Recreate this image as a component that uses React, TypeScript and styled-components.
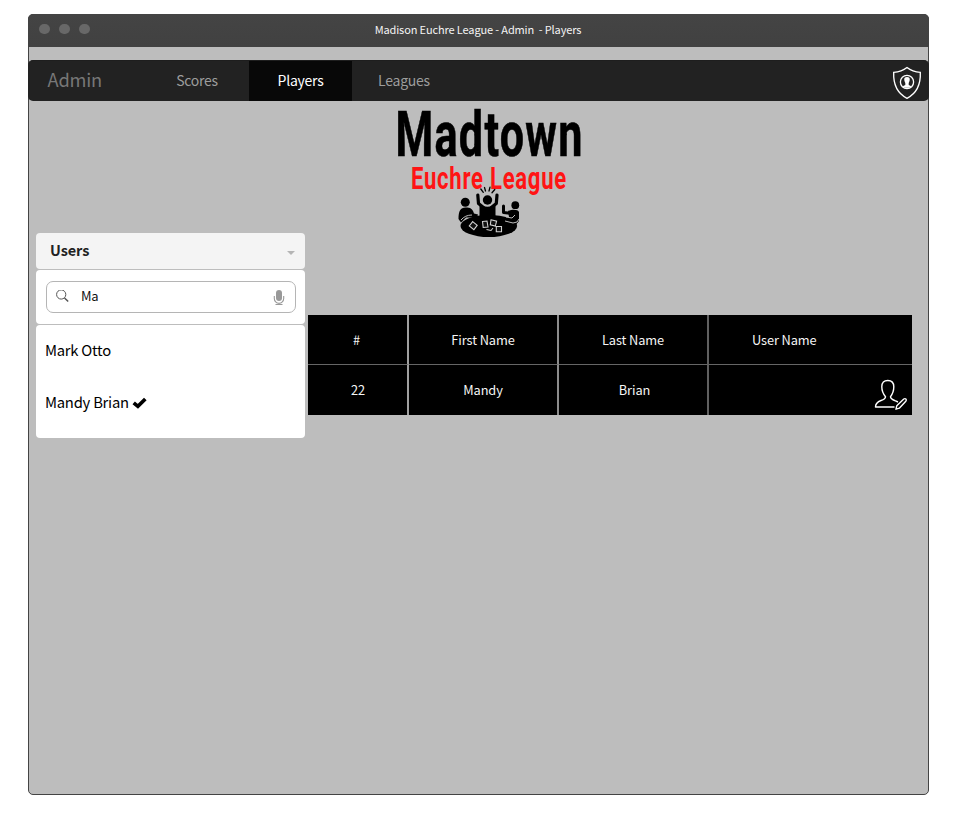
import React from 'react';
import styled, { createGlobalStyle } from 'styled-components';

const Global = createGlobalStyle`
  * { box-sizing: border-box; }
  body { margin: 0; background: #fff; font-family: "Noto Sans CJK SC", "Noto Sans", sans-serif; }
`;

const Desktop = styled.div`
  padding: 14px 26px 20px 28px;
  height: 815px;
`;
const Window = styled.div`
  width: 901px;
  height: 781px;
  background: #bdbdbd;
  border: 1px solid #444;
  border-radius: 5px;
`;
const TitleBar = styled.header`
  display: grid;
  grid-template-columns: 100px 1fr 100px;
  align-items: center;
  height: 33px;
  margin: -1px -1px 0;
  background: linear-gradient(#444, #414141);
  border-radius: 5px 5px 0 0;
`;
const Dots = styled.div`
  display: flex;
  gap: 9.5px;
  padding: 0 0 3px 11px;
`;
const Dot = styled.span`
  width: 10.5px;
  height: 10.5px;
  border-radius: 50%;
  background: #686868;
`;
const Title = styled.h1`
  margin: 0;
  text-align: center;
  color: #f4f4f4;
  font-size: 11px;
  font-weight: 400;
  letter-spacing: -0.13px;
  line-height: 16px;
  padding: 0 1px 3px 0;
  white-space: pre;
`;
const NavBar = styled.nav`
  display: flex;
  height: 41px;
  margin: 13px -1px 0;
  border-radius: 5px;
  background: #222;
  border-top: 1px solid #1e1e1e;
`;
const Brand = styled.div`
  width: 117px;
  padding-left: 19.5px;
  color: #777;
  font-size: 18.3px;
  letter-spacing: -0.2px;
  line-height: 37px;
`;
const Tab = styled.a<{ $active?: boolean; $width: number }>`
  width: ${p => p.$width}px;
  text-align: center;
  font-size: 14px;
  letter-spacing: -0.25px;
  line-height: 39px;
  color: ${p => (p.$active ? '#fff' : '#9d9d9d')};
  background: ${p => (p.$active ? '#080808' : 'transparent')};
`;
const ShieldButton = styled.div`
  margin: 5px 7px 0 auto;
  height: 34px;
  svg { display: block; }
`;
const LogoArea = styled.div`
  height: 132px;
  padding-left: 361px;
  svg { display: block; overflow: visible; }
`;
const Content = styled.main`
  display: flex;
  gap: 3px;
  padding-left: 7px;
`;
const Sidebar = styled.aside`
  display: flex;
  flex-direction: column;
  gap: 1px;
  width: 269px;
`;
const Panel = styled.section<{ $height: number; $tint?: boolean }>`
  height: ${p => p.$height}px;
  background: ${p => (p.$tint ? '#f4f4f4' : '#fff')};
  border-radius: 4px;
`;
const PanelHead = styled.div`
  display: flex;
  justify-content: space-between;
  padding: 0 10px 0 14px;
  font-size: 14.5px;
  font-weight: 700;
  letter-spacing: -0.1px;
  line-height: 34px;
  color: #222;
`;
const Caret = styled.span`
  margin-top: 18px;
  width: 0;
  height: 0;
  border: 4.5px solid transparent;
  border-top-color: #b5b5b5;
  border-bottom: 0;
`;
const SearchBox = styled.div`
  display: flex;
  align-items: center;
  height: 32px;
  margin: 0 9px 0 10px;
  padding: 0 10px 0 9px;
  border: 1px solid #b5b5b5;
  border-radius: 7px;
  font-size: 13px;
  letter-spacing: -0.2px;
  line-height: 28px;
  color: #111;
`;
const SearchPad = styled.div`
  padding-top: 11px;
`;
const Query = styled.span`
  flex: 1;
  padding: 0 0 3px 11px;
`;
const UserRow = styled.div`
  display: flex;
  align-items: center;
  gap: 4px;
  height: 52px;
  padding: 0 0 3px 9px;
  font-size: 14.8px;
  letter-spacing: -0.24px;
  color: #000;
  svg { margin: 3px 0 0 -1px; }
`;
const Table = styled.div`
  display: grid;
  grid-template-columns: 101px 150px 150px 203px;
  grid-template-rows: 50px 50px;
  width: 604px;
  margin-top: 82px;
  height: 100px;
`;
const Cell = styled.div<{ $line?: string; $head?: boolean; $shift?: number }>`
  display: flex;
  align-items: center;
  justify-content: center;
  background: #000;
  color: #f5f5f5;
  font-size: 12.8px;
  letter-spacing: -0.1px;
  padding-left: ${p => p.$shift || 0}px;
  padding-bottom: ${p => (p.$head ? 0 : 2)}px;
  border-right: ${p => (p.$line ? `2px solid ${p.$line}` : '0')};
  border-bottom: ${p => (p.$head ? '1px solid #666' : '0')};
`;
const NumberHead = styled(Cell)`
  padding-right: 2px;
`;
const UserCell = styled(Cell)`
  justify-content: flex-start;
  padding-left: 43px;
`;
const EditCell = styled(Cell)`
  justify-content: flex-end;
  align-items: flex-start;
  padding: 14px 4px 0 0;
`;

const Shield = () => (
  <svg width="30" height="34" viewBox="0 0 30 34" fill="none" stroke="#fff">
    <path d="M15 1.5C11 4.7 6.500 6 1.700 6.300C1.200 18 4.500 27 15 32.300C25.500 27 28.800 18 28.300 6.300C23.500 6 19 4.700 15 1.500Z" strokeWidth="1.35" />
    <circle cx="15" cy="16" r="6.600" strokeWidth="1.3" />
    <path fill="#fff" stroke="none" d="M15 11c-2.200 0-3 1.300-2.700 3 .2 1.500.7 2.300 1 3v2l-2.700 1.300C12.500 22.300 17.500 22.300 19.400 20.300L16.700 19v-2c.3-.7.8-1.500 1-3 .3-1.700-.5-3-2.700-3Z" />
  </svg>
);

const Logo = () => (
  <svg width="200" height="137" viewBox="390 101 200 137">
    <g fontFamily="Roboto, sans-serif" fontWeight="700">
      <text transform="translate(395.500 156) scale(0.690 1)" fontSize="62.500" textLength="271" lengthAdjust="spacing" stroke="#000" strokeWidth="0.600">Madtown</text>
      <text transform="translate(411 189) scale(0.690 1)" fontSize="32" textLength="225" lengthAdjust="spacing" fill="#ff1414">Euchre League</text>
    </g>
    <g stroke="#000" strokeLinecap="round" fill="none">
      <path strokeWidth="1.300" d="M480.800 189l2.500 3.300M484.500 187.500l1 3.500M490 187.200l-1 3.800M494.800 189.500l-2.800 3.200" />
      <path strokeWidth="3.200" strokeLinejoin="round" d="M477.800 195l.7 8.500 5 4M497 195l-.7 8.500-5 4" />
      <path strokeWidth="3" strokeLinejoin="round" d="M503.500 206v6.500l8 1" />
    </g>
    <circle cx="465.300" cy="202.300" r="4.500" />
    <circle cx="487.500" cy="200" r="4.700" />
    <circle cx="515.300" cy="205.200" r="3.900" />
    <path d="M458.500 219c0-8 2-11.500 7-11.500 5 0 7 1 8.500 6l4 1-1 3H466l-5 5Z" />
    <path d="M479.500 204c3 3.500 13 3.500 16 0v12h-16Z" />
    <path d="M508 211c5-2 10-1.500 11 1v9l-4 5-6-3-8-3v-2l8-1Z" />
    <ellipse cx="488.800" cy="226" rx="28.300" ry="11" />
    <g fill="#111" stroke="#d0d0d0" strokeWidth="1.100">
      <path d="M472.700 221.600l4.500 3.800-3.300 4.200-4.600-3.800ZM482.500 221.500l4.500-.5 1 6-4.800.5ZM491 219.800l5.600 1.300-1.300 5-5-1.300ZM496.300 226.500h5.200v5.200h-5.200Z" />
      <path d="M486.500 229.500l4.500 1 2-2.500" fill="none" />
    </g>
    <path stroke="#bdbdbd" fill="none" strokeWidth="1" d="M461 220q4-5 11-5M505 221l8 2q5 0 6-4M506 217l6 1 3-3" />
  </svg>
);

const SearchIcon = () => (
  <svg width="14" height="15" viewBox="0 1.500 14 15" fill="none" stroke="#555">
    <circle cx="5.200" cy="6" r="4.600" strokeWidth="1" />
    <path d="M8.500 9.500l3.700 3.500" strokeWidth="1.500" />
  </svg>
);

const Mic = () => (
  <svg width="12" height="17" viewBox="0 0 12 17" fill="none" stroke="#999">
    <rect x="3" y="1" width="6" height="11" rx="3" fill="#999" stroke="none" />
    <path d="M1.300 7v2.500a4.700 4.700 0 0 0 9.400 0V7M6 14v2M2.500 15.500h7" strokeWidth="1.100" />
  </svg>
);

const Check = () => (
  <svg width="15" height="12" viewBox="0 0 15 12">
    <path d="M1.700 5.800L5.900 9.300L13.300 2" fill="none" stroke="#000" strokeWidth="3.700" />
  </svg>
);

const EditUser = () => (
  <svg width="34" height="32" viewBox="0 0 34 32" fill="none" stroke="#fff" strokeWidth="1.400" strokeLinejoin="round">
    <path d="M20.500 28H1.500C1.500 24.500 3 23 7 21.500C10.500 20.300 11.500 19.700 11.500 17.700C8.800 14.500 7.800 12 7.800 7.800C7.800 3.500 10 1.500 13.800 1.500S19.800 3.500 19.800 7.800C19.800 12 19 14.500 16.500 17.700C16.500 19.700 18 20.300 21 21.700L24 23" />
    <path d="M22 30.200L22.800 26.700L29.800 20Q31 19.200 31.900 20.100T31.800 22.300L25.300 29.200Z" />
  </svg>
);

export default function App() {
  return (
    <>
      <Global />
      <Desktop>
        <Window>
          <TitleBar>
            <Dots><Dot /><Dot /><Dot /></Dots>
            <Title>{'Madison Euchre League - Admin  - Players'}</Title>
          </TitleBar>
          <NavBar>
            <Brand>Admin</Brand>
            <Tab $width={104}>Scores</Tab>
            <Tab $width={103} $active>Players</Tab>
            <Tab $width={104}>Leagues</Tab>
            <ShieldButton><Shield /></ShieldButton>
          </NavBar>
          <LogoArea><Logo /></LogoArea>
          <Content>
            <Sidebar>
              <Panel $height={36} $tint>
                <PanelHead>Users<Caret /></PanelHead>
              </Panel>
              <Panel $height={54}>
                <SearchPad>
                  <SearchBox><SearchIcon /><Query>Ma</Query><Mic /></SearchBox>
                </SearchPad>
              </Panel>
              <Panel $height={113}>
                <UserRow>Mark Otto</UserRow>
                <UserRow>Mandy Brian<Check /></UserRow>
              </Panel>
            </Sidebar>
            <Table>
              <NumberHead $head $line="#a0a0a0">#</NumberHead>
              <Cell $head $line="#8c8c8c">First Name</Cell>
              <Cell $head $line="#606060">Last Name</Cell>
              <UserCell $head>User Name</UserCell>
              <Cell $line="#a0a0a0" $shift={1}>22</Cell>
              <Cell $line="#8c8c8c">Mandy</Cell>
              <Cell $line="#606060" $shift={3}>Brian</Cell>
              <EditCell><EditUser /></EditCell>
            </Table>
          </Content>
        </Window>
      </Desktop>
    </>
  );
}
